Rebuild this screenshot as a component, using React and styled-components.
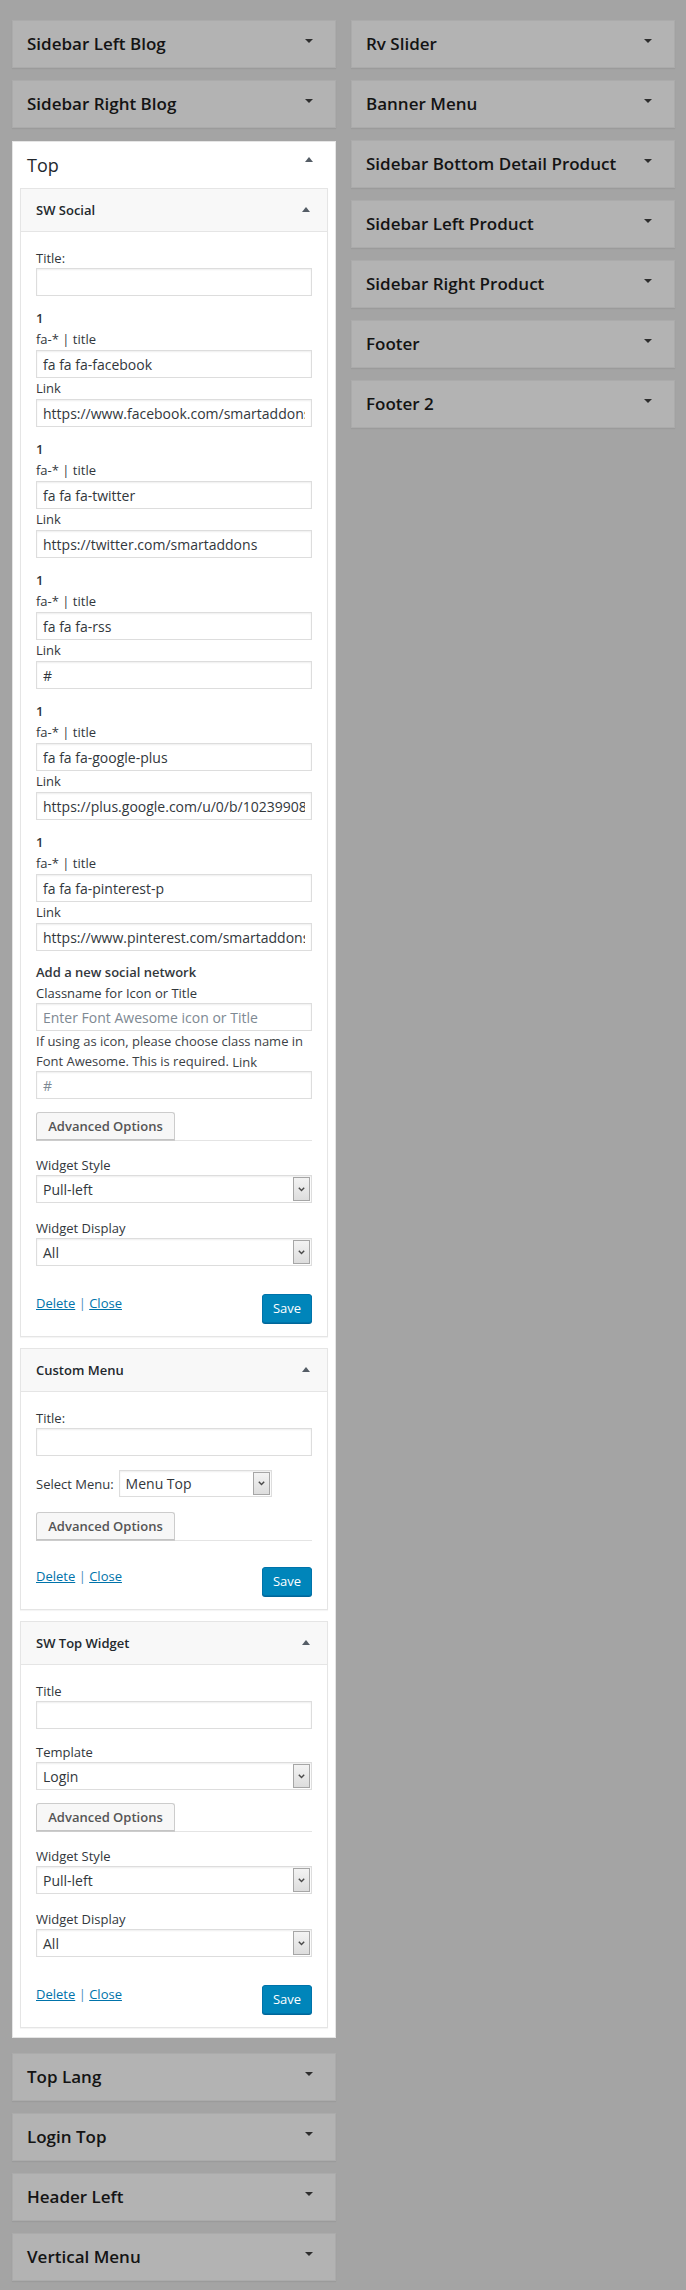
import React from 'react';
import styled, { createGlobalStyle } from 'styled-components';

const Global = createGlobalStyle`
  html, body { margin: 0; padding: 0; background: #a4a4a4; }
  body {
    font-family: "Open Sans", "Noto Sans", sans-serif;
    font-size: 13px;
    color: #32373c;
  }
  * { box-sizing: border-box; }
`;

const Page = styled.div`
  display: flex;
  align-items: flex-start;
  gap: 15px;
  padding: 20px 11px 10px 12px;
`;

const Column = styled.div`
  width: 324px;
  display: flex;
  flex-direction: column;
  gap: 12px;
`;

const Collapsed = styled.div`
  height: 48px;
  background: #b3b3b3;
  border: 1px solid #ababab;
  box-shadow: 0 1px 1px rgba(0, 0, 0, 0.05);
  display: flex;
  justify-content: space-between;
  align-items: flex-start;
  padding: 0 22px 0 14px;
`;

const SidebarTitle = styled.h2`
  margin: 0;
  font-size: 17px;
  font-weight: 600;
  line-height: 46px;
  color: #141414;
  white-space: nowrap;
`;

const Arrow = styled.svg`
  flex: none;
  margin-top: ${(p) => p.$mt}px;
  fill: ${(p) => p.$color};
`;

const OpenSidebar = styled.div`
  background: #fff;
  border: 1px solid #e5e5e5;
  margin: 1px 0 3px;
  padding: 0 7px 9px;
`;

const OpenHead = styled.div`
  height: 46px;
  display: flex;
  justify-content: space-between;
  align-items: flex-start;
  padding: 0 15px 0 7px;
`;

const OpenTitle = styled.h2`
  margin: 0;
  font-size: 18px;
  font-weight: 400;
  line-height: 46px;
  color: #23282d;
`;

const WidgetList = styled.div`
  display: flex;
  flex-direction: column;
  gap: 11px;
`;

const Widget = styled.div`
  background: #fff;
  border: 1px solid #e5e5e5;
  box-shadow: 0 1px 1px rgba(0, 0, 0, 0.04);
`;

const WidgetTop = styled.div`
  height: 43px;
  background: #f8f8f8;
  border-bottom: 1px solid #e5e5e5;
  display: flex;
  justify-content: space-between;
  align-items: flex-start;
  padding: 0 17px 0 15px;
`;

const WidgetTitle = styled.h3`
  margin: 0;
  font-size: 13px;
  font-weight: 600;
  line-height: 42px;
  color: #23282d;
`;

const WidgetBody = styled.div`
  padding: 16px 15px 13px;
  display: flex;
  flex-direction: column;
`;

const Block = styled.div`
  margin-top: ${(p) => p.$mt || 0}px;
`;

const Label = styled.label`
  display: block;
  line-height: ${(p) => p.$lh || 20}px;
  color: #32373c;
  font-weight: ${(p) => (p.$bold ? 600 : 400)};
  white-space: nowrap;
`;

const Hint = styled.p`
  margin: 0;
  line-height: 20px;
  color: #3c4146;
`;

const InlineLabel = styled.span`
  display: inline-block;
  position: relative;
  top: 1px;
`;

const TextInput = styled.input`
  display: block;
  width: 100%;
  height: 28px;
  margin: 0;
  padding: 0 6px;
  border: 1px solid #ddd;
  box-shadow: inset 0 1px 2px rgba(0, 0, 0, 0.07);
  background: #fff;
  font-family: "Open Sans", "Noto Sans", sans-serif;
  font-size: 14px;
  color: #32373c;
  outline: none;
  &::placeholder { color: #7e8993; }
`;

const SelectBox = styled.div`
  display: flex;
  align-items: stretch;
  width: ${(p) => (p.$w ? `${p.$w}px` : '100%')};
  height: ${(p) => p.$h || 28}px;
  border: 1px solid #ddd;
  box-shadow: inset 0 1px 2px rgba(0, 0, 0, 0.07);
  background: #fff;
  font-size: 14px;
  color: #32373c;
`;

const SelectText = styled.span`
  flex: 1;
  display: flex;
  align-items: center;
  padding-left: 6px;
  white-space: nowrap;
  overflow: hidden;
`;

const SelectButton = styled.span`
  flex: none;
  width: 17px;
  margin: 1px;
  border: 1px solid #a6a6a6;
  background: linear-gradient(#f3f3f3, #dddddd);
  display: flex;
  align-items: center;
  justify-content: center;
`;

const SelectRow = styled.div`
  display: flex;
  align-items: center;
  gap: 5px;
  margin-top: ${(p) => p.$mt || 0}px;
`;

const TabLine = styled.div`
  margin-top: ${(p) => p.$mt || 0}px;
  border-bottom: 1px solid #e4e4e4;
  display: flex;
`;

const AdvancedButton = styled.button`
  height: 28px;
  width: 139px;
  margin: 0;
  padding: 0;
  border: 1px solid #cccccc;
  border-bottom-color: #c4c4c4;
  border-radius: 3px 3px 0 0;
  background: #f7f7f7;
  box-shadow: 0 1px 0 #cccccc;
  font-family: "Open Sans", "Noto Sans", sans-serif;
  font-size: 13px;
  font-weight: 600;
  color: #555;
`;

const Footer = styled.div`
  margin-top: ${(p) => p.$mt || 28}px;
  display: flex;
  justify-content: space-between;
  align-items: flex-start;
`;

const Actions = styled.div`
  line-height: 20px;
  margin-top: -1px;
  color: #4d8fc0;
`;

const ActionLink = styled.a`
  color: #0073aa;
  text-decoration: underline;
  cursor: pointer;
`;

const SaveButton = styled.button`
  width: 50px;
  height: 29px;
  margin: 0;
  padding: 0 0 1px;
  border: 1px solid #0073aa;
  border-radius: 3px;
  background: #0085ba;
  box-shadow: 0 1px 0 #006799;
  color: #fff;
  font-family: "Open Sans", "Noto Sans", sans-serif;
  font-size: 13px;
`;

const Down = ({ mt = 18 }) => (
  <Arrow $mt={mt} $color="#2e2e2e" width="8" height="4" viewBox="0 0 8 4">
    <path d="M0 0h8L4 4z" />
  </Arrow>
);

const Up = ({ mt, color }) => (
  <Arrow $mt={mt} $color={color} width="8" height="5" viewBox="0 0 8 5">
    <path d="M0 5h8L4 0z" />
  </Arrow>
);

const Chevron = () => (
  <svg width="7" height="5" viewBox="0 0 7 5">
    <path d="M0.8 0.8L3.5 3.6L6.2 0.8" fill="none" stroke="#4a4a4a" strokeWidth="1.4" />
  </svg>
);

const Select = ({ value, w, h }) => (
  <SelectBox $w={w} $h={h}>
    <SelectText>{value}</SelectText>
    <SelectButton>
      <Chevron />
    </SelectButton>
  </SelectBox>
);

const Field = ({ label, value, placeholder, mt, lh }) => (
  <Block $mt={mt}>
    <Label $lh={lh}>{label}</Label>
    <TextInput readOnly value={value || ''} placeholder={placeholder} />
  </Block>
);

const SelectField = ({ label, value, mt }) => (
  <Block $mt={mt}>
    <Label>{label}</Label>
    <Select value={value} />
  </Block>
);

const Advanced = ({ mt = 13 }) => (
  <TabLine $mt={mt}>
    <AdvancedButton type="button">Advanced Options</AdvancedButton>
  </TabLine>
);

const WidgetFooter = ({ mt }) => (
  <Footer $mt={mt}>
    <Actions>
      <ActionLink>Delete</ActionLink> | <ActionLink>Close</ActionLink>
    </Actions>
    <SaveButton type="button">Save</SaveButton>
  </Footer>
);

const WidgetHeader = ({ title }) => (
  <WidgetTop>
    <WidgetTitle>{title}</WidgetTitle>
    <Up mt={18} color="#555d66" />
  </WidgetTop>
);

const socials = [
  ['fa fa fa-facebook', 'https://www.facebook.com/smartaddons'],
  ['fa fa fa-twitter', 'https://twitter.com/smartaddons'],
  ['fa fa fa-rss', '#'],
  ['fa fa fa-google-plus', 'https://plus.google.com/u/0/b/10239908'],
  ['fa fa fa-pinterest-p', 'https://www.pinterest.com/smartaddons/'],
];

const SidebarBox = ({ title }) => (
  <Collapsed>
    <SidebarTitle>{title}</SidebarTitle>
    <Down />
  </Collapsed>
);

export default function App() {
  return (
    <>
      <Global />
      <Page>
        <Column>
          <SidebarBox title="Sidebar Left Blog" />
          <SidebarBox title="Sidebar Right Blog" />
          <OpenSidebar>
            <OpenHead>
              <OpenTitle>Top</OpenTitle>
              <Up mt={15} color="#555d66" />
            </OpenHead>
            <WidgetList>
              <Widget>
                <WidgetHeader title="SW Social" />
                <WidgetBody>
                  <Field label="Title:" />
                  {socials.map(([icon, link], i) => (
                    <Block key={i} $mt={12}>
                      <Label $lh={21} $bold>1</Label>
                      <Label $lh={21}>fa-* | title</Label>
                      <TextInput readOnly value={icon} />
                      <Label $lh={21}>Link</Label>
                      <TextInput readOnly value={link} />
                    </Block>
                  ))}
                  <Block $mt={11}>
                    <Label $lh={21} $bold>Add a new social network</Label>
                    <Label>Classname for Icon or Title</Label>
                    <TextInput readOnly placeholder="Enter Font Awesome icon or Title" />
                    <Hint>
                      If using as icon, please choose class name in Font Awesome. This is required.{' '}
                      <InlineLabel>Link</InlineLabel>
                    </Hint>
                    <TextInput readOnly placeholder="#" />
                  </Block>
                  <Advanced mt={13} />
                  <SelectField label="Widget Style" value="Pull-left" mt={14} />
                  <SelectField label="Widget Display" value="All" mt={15} />
                  <WidgetFooter mt={28} />
                </WidgetBody>
              </Widget>

              <Widget>
                <WidgetHeader title="Custom Menu" />
                <WidgetBody>
                  <Field label="Title:" />
                  <SelectRow $mt={14}>
                    <Label>Select Menu:</Label>
                    <Select value="Menu Top" w={153} h={27} />
                  </SelectRow>
                  <Advanced mt={15} />
                  <WidgetFooter mt={26} />
                </WidgetBody>
              </Widget>

              <Widget>
                <WidgetHeader title="SW Top Widget" />
                <WidgetBody>
                  <Field label="Title" />
                  <SelectField label="Template" value="Login" mt={13} />
                  <Advanced mt={13} />
                  <SelectField label="Widget Style" value="Pull-left" mt={14} />
                  <SelectField label="Widget Display" value="All" mt={15} />
                  <WidgetFooter mt={28} />
                </WidgetBody>
              </Widget>
            </WidgetList>
          </OpenSidebar>
          <SidebarBox title="Top Lang" />
          <SidebarBox title="Login Top" />
          <SidebarBox title="Header Left" />
          <SidebarBox title="Vertical Menu" />
        </Column>
        <Column>
          <SidebarBox title="Rv Slider" />
          <SidebarBox title="Banner Menu" />
          <SidebarBox title="Sidebar Bottom Detail Product" />
          <SidebarBox title="Sidebar Left Product" />
          <SidebarBox title="Sidebar Right Product" />
          <SidebarBox title="Footer" />
          <SidebarBox title="Footer 2" />
        </Column>
      </Page>
    </>
  );
}
